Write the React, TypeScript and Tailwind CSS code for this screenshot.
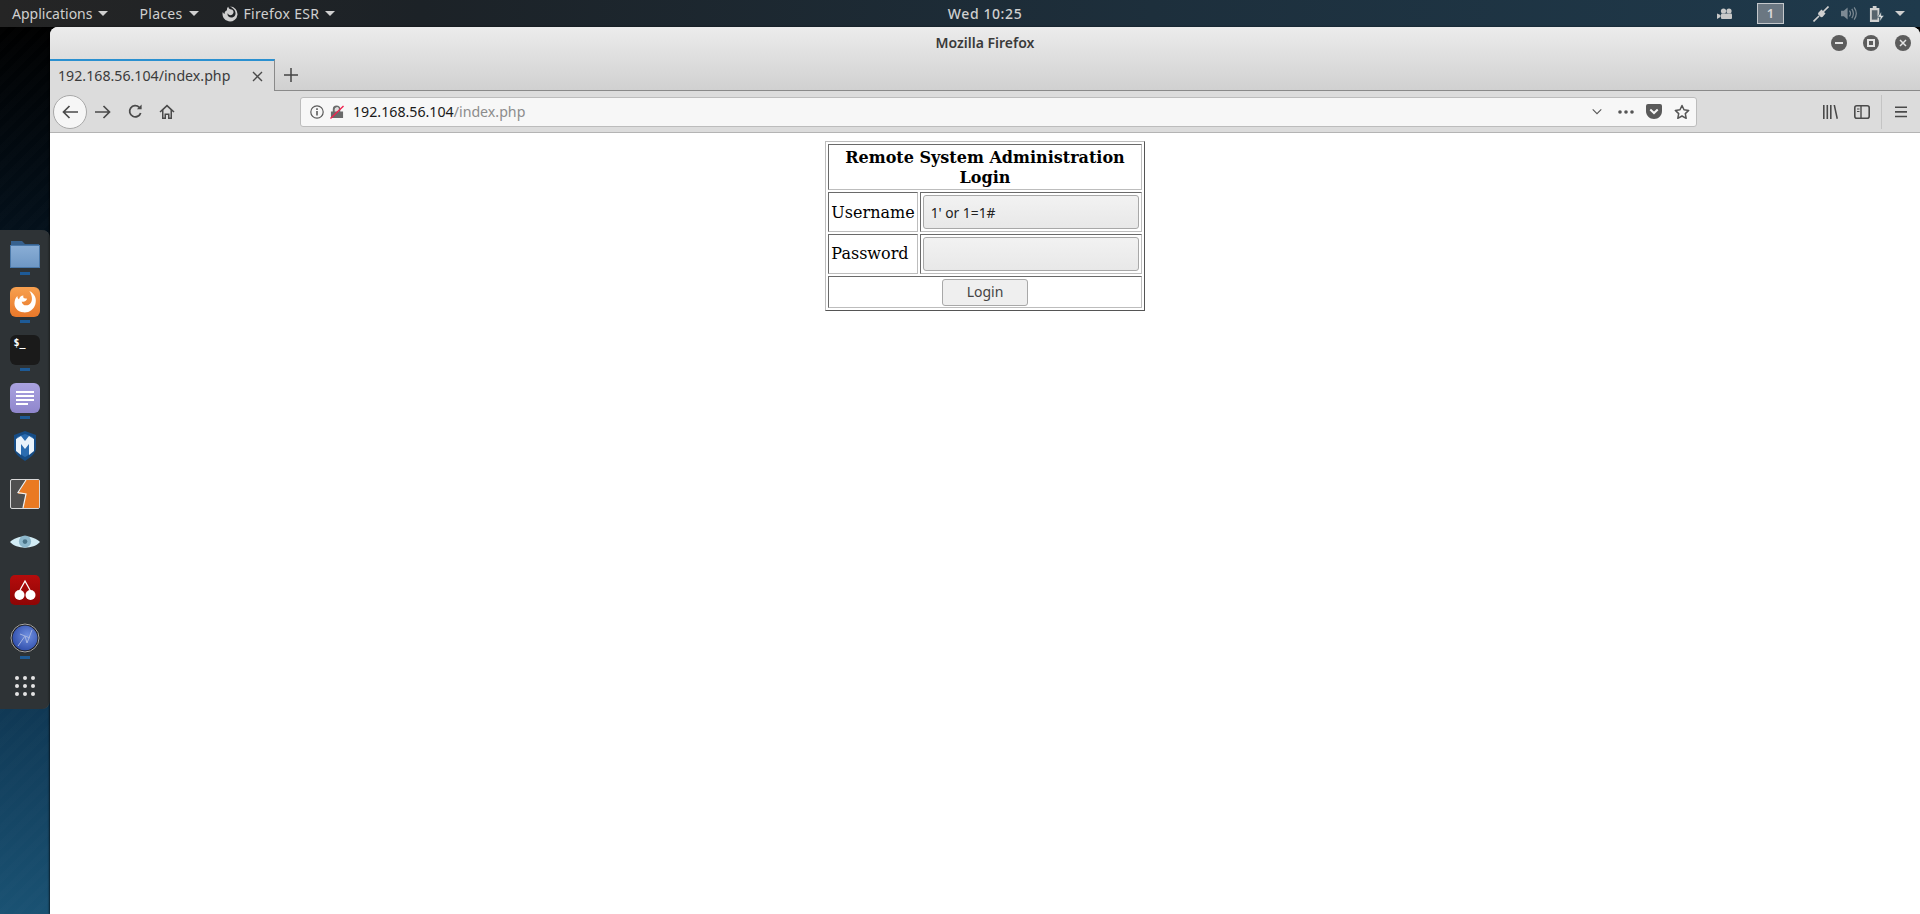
import type { ReactNode } from "react";

const uiFont = "font-['Noto_Sans',sans-serif]";

function Caret({ className = "" }: { className?: string }) {
  return (
    <svg width="10" height="5" viewBox="0 0 10 5" className={className}>
      <path d="M0 0h10L5 5z" fill="#d0d0d0" />
    </svg>
  );
}

function TopBar() {
  return (
    <header
      className={`flex h-[27px] shrink-0 items-center bg-[linear-gradient(90deg,#252525_0%,#1c2227_22%,#1d2f3c_60%,#1f3a4c_100%)] text-[14px] text-[#cfcfcf] ${uiFont}`}
    >
      <div className="flex w-[722px] items-center pl-3">
        <span>Applications</span>
        <Caret className="ml-[6px]" />
        <span className="ml-[31px] tracking-[0.3px]">Places</span>
        <Caret className="ml-[6px]" />
        <svg width="16" height="16" viewBox="0 0 16 16" className="ml-[23px]">
          <path
            d="M8 .5a7.5 7.5 0 1 1-7.2 5.4c.4 1 1 1.6 1.7 2C2.6 6 3.600 4.800 5 4.300 4.800 3 5.200 1.500 6.300.700 6.500 2.500 8 3.200 9.500 3.500 11 3.800 11.700 5 11.500 6.500 11.200 8.500 9.200 9.500 7.500 9 6.500 8.700 6 8 5.800 7.300 5.300 8 5.500 9.500 6.500 10.500 8 12 11.500 12 13 9.500 14 7.800 13.500 5 12 3.500 10.800 2.200 9.500 1.300 8 .5z"
            fill="#cfcfcf"
          />
        </svg>
        <span className="ml-[6px] tracking-[0.3px]">Firefox ESR</span>
        <Caret className="ml-[6px]" />
      </div>
      <div className="w-[526px] text-center font-medium tracking-[0.6px]">Wed 10:25</div>
      <div className="ml-auto flex items-center">
        <svg width="16" height="12" viewBox="0 0 16 12" className="mr-[24px]">
          <circle cx="6.500" cy="3" r="2.600" fill="#c8c8c8" />
          <circle cx="12" cy="3" r="2.600" fill="#c8c8c8" />
          <rect x="4" y="5.500" width="11" height="5.500" rx="1" fill="#c8c8c8" />
          <path d="M0 5.500l3.500 1.500v2L0 11z" fill="#c8c8c8" />
        </svg>
        <div className="flex h-[21px] w-[27px] items-center justify-center border border-[#c4c8cc] bg-[#6b7782] text-[13px] font-semibold text-[#d8d8d8]">
          1
        </div>
        <svg width="16" height="16" viewBox="0 0 16 16" className="ml-[29px]">
          <path d="M15.500.500L10 6M6 10L.500 15.500" stroke="#d0d0d0" strokeWidth="1.600" />
          <path d="M8.500 3.500l4 4-3 3.500-1.500.300-3-3 .300-1.500z" fill="#d0d0d0" />
        </svg>
        <svg width="16" height="15" viewBox="0 0 17 16" className="ml-[12px]">
          <path d="M0 5h3l4-3.500v13L3 11H0z" fill="#7d8a94" />
          <path
            d="M9 5c1.200 1.600 1.200 4.400 0 6M11.500 3c2 3 2 7 0 10M14 1.500c2.800 4 2.800 9 0 13"
            fill="none"
            stroke="#7d8a94"
            strokeWidth="1.300"
          />
        </svg>
        <svg width="16" height="16" viewBox="0 0 17 17" className="ml-[12px]">
          <path d="M4 0h4v2h3v15H1V2h3z" fill="#d0d0d0" />
          <path d="M3 4.500h6v10H3z" fill="#56636d" />
          <path d="M13 6l-4 6h3l-1 5 5-7h-3z" fill="#e0e0e0" stroke="#1f3a4c" strokeWidth=".6" />
        </svg>
        <Caret className="ml-[10px] mr-[15px]" />
      </div>
    </header>
  );
}

function DockItem({ children, running = false }: { children: ReactNode; running?: boolean }) {
  return (
    <div className="flex h-[48px] w-full flex-col items-center">
      <div className="flex h-[30px] w-[30px] items-center justify-center">{children}</div>
      {running && <div className="mt-[3px] h-[3px] w-[10px] bg-[#1d5a96]" />}
    </div>
  );
}

function Dock() {
  return (
    <nav className="mt-[203px] flex h-[479px] w-[50px] flex-col rounded-r-[8px] border-r border-[#3d4345] bg-[#2e3336] pt-[9px]">
      <DockItem running>
        <svg width="30" height="27" viewBox="0 0 30 27">
          <defs>
            <linearGradient id="folderFront" x1="0" y1="0" x2="0" y2="1">
              <stop offset="0" stopColor="#8aaed6" />
              <stop offset="1" stopColor="#6e97c4" />
            </linearGradient>
          </defs>
          <path d="M1 0h11l3 3h14v6H1z" fill="#36618f" />
          <rect x="0.500" y="4.500" width="29" height="22" fill="url(#folderFront)" stroke="#4b79aa" />
        </svg>
      </DockItem>
      <DockItem running>
        <div className="flex h-[30px] w-[30px] items-center justify-center rounded-[6px] bg-[linear-gradient(#f7a04f,#e9782a)]">
          <svg width="24" height="24" viewBox="0 0 22 22">
            <path
              d="M15 1c5 2.500 7 7 5.500 12-1.500 5-6 8-11 7.500C4 20 .500 15.500 1.500 10.500 2 8 3 6.500 4 5.500 4 7 4.500 7.800 5.500 8.500 6 6.500 7.500 5 9.500 5 9 8 10.500 7.500 13 8c-1 2.500-3 3-5 2.500 0 3 3.500 4.500 6.500 3C18 12 18.500 6 15 1z"
              fill="#fff"
            />
          </svg>
        </div>
      </DockItem>
      <DockItem running>
        <div className="h-[30px] w-[30px] rounded-[6px] bg-[#1a1a1a] pl-[4px] pt-[2px] font-['DejaVu_Sans_Mono',monospace] text-[10px] font-bold leading-[12px] text-white">
          $_
        </div>
      </DockItem>
      <DockItem running>
        <div className="flex h-[30px] w-[30px] flex-col items-center justify-center gap-[2px] rounded-[6px] bg-[linear-gradient(#a9a2e0,#8f86cc)]">
          <div className="h-[2px] w-[18px] bg-white" />
          <div className="h-[2px] w-[18px] bg-white" />
          <div className="h-[2px] w-[18px] bg-white" />
          <div className="mr-[6px] h-[2px] w-[12px] bg-white" />
        </div>
      </DockItem>
      <DockItem>
        <svg width="24" height="30" viewBox="0 0 24 30">
          <path d="M12 0l11 4v13c0 5-5 9-11 13C6 26 1 22 1 17V4z" fill="#164c85" />
          <path d="M12 3l8 3v11c0 4-4 7-8 9-4-2-8-5-8-9V6z" fill="#2b6cb0" />
          <path d="M3 8l5-3 4 5 4-5 5 3v12l-5 4V13l-4 5-4-5v11l-5-4z" fill="#eaf3fb" />
        </svg>
      </DockItem>
      <DockItem>
        <svg width="30" height="30" viewBox="0 0 30 30">
          <rect x="0.500" y="0.500" width="29" height="29" rx="1.500" fill="#505050" stroke="#d8d8d8" />
          <path d="M16 1h13v28H13l3-14H8z" fill="#ea7a22" />
          <path d="M16 1L8 13.500l8 1.500-3 14" fill="none" stroke="#f2f2f2" strokeWidth="1.200" />
        </svg>
      </DockItem>
      <DockItem>
        <svg width="32" height="16" viewBox="0 0 32 16">
          <path d="M0 8C7 0 25 0 32 8 25 16 7 16 0 8z" fill="#d2ecf5" />
          <circle cx="16" cy="7.500" r="6.500" fill="#8db8cc" />
          <circle cx="16" cy="7.500" r="2.500" fill="#4a7488" />
        </svg>
      </DockItem>
      <DockItem>
        <div className="flex h-[30px] w-[30px] items-center justify-center rounded-[5px] bg-[linear-gradient(#b50c0c,#8e0505)]">
          <svg width="22" height="22" viewBox="0 0 22 22">
            <circle cx="5.500" cy="16" r="5" fill="#fff" />
            <circle cx="16.500" cy="16" r="5" fill="#fff" />
            <path d="M5.500 12L11 2l5.500 10" fill="none" stroke="#fff" strokeWidth="1.300" />
          </svg>
        </div>
      </DockItem>
      <DockItem running>
        <svg width="30" height="30" viewBox="0 0 30 30">
          <defs>
            <radialGradient id="globeFill" cx="0.600" cy="0.400" r="0.700">
              <stop offset="0" stopColor="#6f8fe0" />
              <stop offset="1" stopColor="#2a48a6" />
            </radialGradient>
          </defs>
          <circle cx="15" cy="15" r="14.500" fill="#1c1c1c" />
          <circle cx="15" cy="15" r="14" fill="none" stroke="#a8a8a8" strokeWidth="1" />
          <circle cx="15" cy="15" r="12.500" fill="url(#globeFill)" />
          <path d="M8 23l7-10 2 7 5-13M10 11l10 4" fill="none" stroke="#a5b4e0" strokeWidth="1" />
        </svg>
      </DockItem>
      <div className="grid w-[20px] grid-cols-3 gap-[4px] self-center pt-[5px]">
        {Array.from({ length: 9 }).map((_, i) => (
          <div key={i} className="h-[4px] w-[4px] rounded-full bg-[#e4e4e4]" />
        ))}
      </div>
    </nav>
  );
}

function WinButton({ children }: { children: ReactNode }) {
  return (
    <div className="flex h-[16px] w-[16px] items-center justify-center rounded-full bg-[#5c5c5c]">
      {children}
    </div>
  );
}

function TitleBar() {
  return (
    <div className={`relative flex h-[32px] items-center justify-center pb-[2px] text-[14px] font-semibold text-[#3a3a3a] ${uiFont}`}>
      Mozilla Firefox
      <div className="absolute right-[9px] top-[8px] flex gap-[16px]">
        <WinButton>
          <div className="h-[2px] w-[8px] bg-[#e4e4e4]" />
        </WinButton>
        <WinButton>
          <div className="h-[8px] w-[8px] border-2 border-[#e4e4e4]" />
        </WinButton>
        <WinButton>
          <svg width="8" height="8" viewBox="0 0 8 8">
            <path d="M1 1l6 6M7 1L1 7" stroke="#e4e4e4" strokeWidth="1.500" />
          </svg>
        </WinButton>
      </div>
    </div>
  );
}

function TabStrip() {
  return (
    <div className={`flex h-[32px] text-[14.200px] text-[#3b3b3b] ${uiFont}`}>
      <div className="flex w-[225px] items-center border-r border-t-2 border-r-[#8a8a8a] border-t-[#2a90d0] bg-[#dcdcdc] pl-[8px] pr-[11px]">
        <span className="flex-1">192.168.56.104/index.php</span>
        <svg width="11" height="11" viewBox="0 0 11 11">
          <path d="M1 1l9 9M10 1l-9 9" stroke="#4a4a4a" strokeWidth="1.400" />
        </svg>
      </div>
      <div className="flex flex-1 items-center border-b border-[#8a8a8a] pl-[9px]">
        <svg width="14" height="14" viewBox="0 0 14 14">
          <path d="M7 0v14M0 7h14" stroke="#444" strokeWidth="1.500" />
        </svg>
      </div>
    </div>
  );
}

function Toolbar() {
  return (
    <div className={`flex h-[42px] items-center border-b border-[#b4b4b4] bg-[#dcdcdc] ${uiFont}`}>
      <div className="ml-[3px] flex h-[34px] w-[34px] items-center justify-center rounded-full border border-[#a8a8a8] bg-[#f6f6f6]">
        <svg width="16" height="14" viewBox="0 0 16 14" fill="none" stroke="#4a4a4a" strokeWidth="1.700">
          <path d="M16 7H1.500M7.500 1L1.500 7l6 6" />
        </svg>
      </div>
      <svg width="16" height="14" viewBox="0 0 16 14" fill="none" stroke="#4a4a4a" strokeWidth="1.700" className="ml-[8px]">
        <path d="M0 7h14.500M8.500 1l6 6-6 6" />
      </svg>
      <svg width="15" height="15" viewBox="0 0 16 16" fill="none" stroke="#4a4a4a" strokeWidth="1.900" className="ml-[17px]">
        <path d="M13.500 9.500A6 6 0 1 1 12 3.500" />
        <path d="M14.500 .5v5h-5z" fill="#4a4a4a" stroke="none" />
      </svg>
      <svg width="16" height="16" viewBox="0 0 16 16" className="ml-[16px]">
        <path
          d="M8 .5L.5 7.500l1 1L3 7.200V15h4v-4h2v4h4V7.200l1.500 1.300 1-1zM4.500 13.500V6L8 2.700 11.500 6v7.500h-1v-4h-5v4z"
          fill="#4a4a4a"
        />
      </svg>
      <div className="ml-[125px] flex h-[30px] w-[1397px] items-center rounded-[3px] border border-[#bcbcbc] bg-[#f7f7f7] pl-[9px] text-[14.200px]">
        <svg width="14" height="14" viewBox="0 0 14 14">
          <circle cx="7" cy="7" r="6.200" fill="none" stroke="#5a5a5a" strokeWidth="1.200" />
          <path d="M6.200 6h1.600v4.500H6.200zM6.200 3.300h1.600v1.600H6.200z" fill="#5a5a5a" />
        </svg>
        <svg width="14" height="14" viewBox="0 0 15 15" className="ml-[6px]">
          <path d="M1 14V7h2V4.500a4 4 0 0 1 8 0V7h3v7z" fill="#6a6a6a" />
          <path d="M5 7V4.500a2.400 2.400 0 0 1 4.500-1V7z" fill="#dcdcdc" />
          <path d="M.5 14.500L14.500 1" stroke="#f0234f" strokeWidth="1.500" />
        </svg>
        <span className="ml-[9px] text-[#1a1a1a]">
          192.168.56.104<span className="text-[#8c8c8c]">/index.php</span>
        </span>
        <div className="ml-auto flex items-center">
          <svg width="10" height="6" viewBox="0 0 11 7" fill="none" stroke="#555" strokeWidth="1.200">
            <path d="M.5 .5l5 5 5-5" />
          </svg>
          <svg width="16" height="4" viewBox="0 0 16 4" fill="#555" className="ml-[16px]">
            <circle cx="2" cy="2" r="1.800" />
            <circle cx="8" cy="2" r="1.800" />
            <circle cx="14" cy="2" r="1.800" />
          </svg>
          <svg width="16" height="15" viewBox="0 0 16 15" className="ml-[12px]">
            <path d="M2 0h12a2 2 0 0 1 2 2v5c0 4.500-3.500 8-8 8s-8-3.500-8-8V2a2 2 0 0 1 2-2z" fill="#5a5a5a" />
            <path d="M4.300 5.500L8 9l3.700-3.500" fill="none" stroke="#f7f7f7" strokeWidth="2" />
          </svg>
          <svg width="16" height="16" viewBox="0 0 16 16" className="ml-[12px] mr-[6px]">
            <path
              d="M8 1.500l2 4.300 4.700.6-3.400 3.200.9 4.700L8 12l-4.200 2.300.9-4.700L1.300 6.400 6 5.800z"
              fill="none"
              stroke="#555"
              strokeWidth="1.500"
              strokeLinejoin="round"
            />
          </svg>
        </div>
      </div>
      <svg width="15" height="14" viewBox="0 0 15 14" fill="#4a4a4a" className="ml-[126px]">
        <path d="M0 0h1.600v14H0zM3.500 0h1.600v14H3.500zM7 0h1.600v14H7zM10.500 0l1.500-.3L15 13.600l-1.500.4z" />
      </svg>
      <svg width="16" height="14" viewBox="0 0 16 14" className="ml-[16px]">
        <rect x=".8" y=".8" width="14.400" height="12.400" rx="2" fill="none" stroke="#4a4a4a" strokeWidth="1.600" />
        <path d="M7 1v12" stroke="#4a4a4a" strokeWidth="1.400" />
        <path d="M3 4h2.500M3 6.500h2.500" stroke="#4a4a4a" strokeWidth="1" />
      </svg>
      <div className="ml-[11px] h-[34px] w-px bg-[#c4c4c4]" />
      <svg width="12" height="12" viewBox="0 0 13 12" fill="#4a4a4a" className="ml-[13px]">
        <path d="M0 0h13v1.700H0zM0 5h13v1.700H0zM0 10h13v1.700H0z" />
      </svg>
    </div>
  );
}

const cellBorder = "border border-t-[#6a6a6a] border-l-[#6a6a6a] border-r-[#bdbdbd] border-b-[#bdbdbd]";
const fieldClass = `block h-[34px] w-[216px] rounded-[3px] border border-[#a8a8a8] bg-[linear-gradient(#f2f2f2,#e8e8e8)] px-[7px] text-[13.800px] text-[#222] outline-none ${uiFont}`;

function LoginTable() {
  return (
    <table className="mx-auto mt-[8px] w-[318px] border-separate border-spacing-[2px] border border-t-[#bdbdbd] border-l-[#bdbdbd] border-r-[#555] border-b-[#555] font-['DejaVu_Serif',serif] text-[16px] leading-[20px] text-black">
      <tbody>
        <tr>
          <th colSpan={2} className={`${cellBorder} h-[46px] px-[10px] pt-[1px] font-bold`}>
            Remote System Administration Login
          </th>
        </tr>
        <tr>
          <td className={`${cellBorder} h-[40px] w-[88px] px-[2px] pt-[1px]`}>Username</td>
          <td className={`${cellBorder} px-[2px]`}>
            <input type="text" defaultValue="1' or 1=1#" className={fieldClass} />
          </td>
        </tr>
        <tr>
          <td className={`${cellBorder} h-[40px] px-[2px]`}>Password</td>
          <td className={`${cellBorder} px-[2px]`}>
            <input type="password" className={fieldClass} />
          </td>
        </tr>
        <tr>
          <td colSpan={2} className={`${cellBorder} h-[32px] text-center`}>
            <button
              type="button"
              className={`mx-auto block h-[27px] w-[86px] rounded-[3px] border border-[#a8a8a8] bg-[#efefef] text-[14px] text-[#444] ${uiFont}`}
            >
              Login
            </button>
          </td>
        </tr>
      </tbody>
    </table>
  );
}

export default function App() {
  return (
    <div className="flex h-[914px] w-[1920px] flex-col overflow-hidden bg-black">
      <TopBar />
      <div className="flex flex-1 bg-[repeating-linear-gradient(135deg,rgba(255,255,255,0.007)_0px,rgba(255,255,255,0.007)_6px,transparent_6px,transparent_12px),linear-gradient(#000_0%,#04101a_22%,#0f3652_75%,#1a5273_100%)]">
        <Dock />
        <main className="flex flex-1 flex-col overflow-hidden rounded-t-[8px] bg-white shadow-[-1px_0_2px_rgba(0,0,0,0.6)]">
          <div className="bg-[linear-gradient(#ececec,#d0d0d0)]">
            <TitleBar />
            <TabStrip />
          </div>
          <Toolbar />
          <LoginTable />
        </main>
      </div>
    </div>
  );
}
